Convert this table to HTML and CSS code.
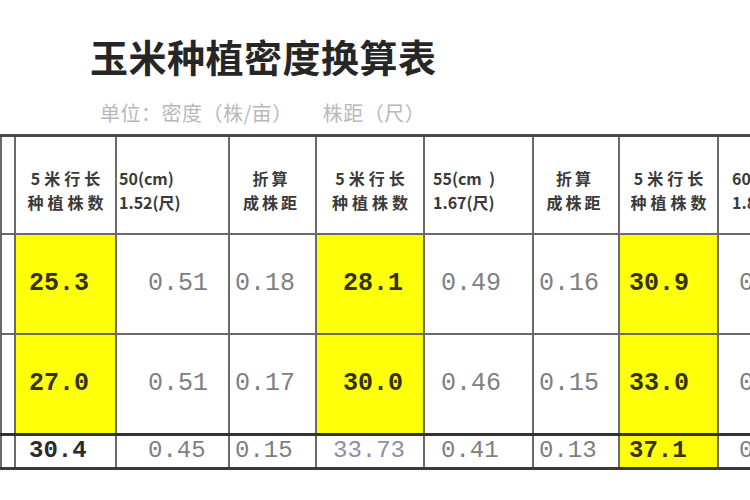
FILE: index.html
```html
<!DOCTYPE html>
<html lang="zh">
<head>
<meta charset="utf-8">
<title>玉米种植密度换算表</title>
<link rel="stylesheet" href="styles.css">
</head>
<body>
<div class="page">
  <h1 class="title">玉米种植密度换算表</h1>
  <p class="subtitle">单位：密度（株/亩）<span class="gap"></span>株距（尺）</p>
  <table class="grid">
    <colgroup>
      <col class="w0"><col class="w1"><col class="w2"><col class="w3"><col class="w4"><col class="w5"><col class="w6"><col class="w7"><col class="w8">
    </colgroup>
    <tr class="head">
      <th></th>
      <th class="c1">5米行长<br>种植株数</th>
      <th class="hl">50(cm)<br>1.52(尺)</th>
      <th class="c3">折算<br>成株距</th>
      <th class="c1">5米行长<br>种植株数</th>
      <th class="hl5">55(cm&nbsp;&nbsp;)<br>1.67(尺)</th>
      <th class="c3">折算<br>成株距</th>
      <th class="c1">5米行长<br>种植株数</th>
      <th class="hl8">60(cm)<br>1.80(尺)</th>
    </tr>
    <tr class="row">
      <td></td>
      <td class="yel n1">25.3</td>
      <td class="g n2">0.51</td>
      <td class="g n3">0.18</td>
      <td class="yel n4">28.1</td>
      <td class="g n5">0.49</td>
      <td class="g n6">0.16</td>
      <td class="yel n7">30.9</td>
      <td class="g n8">0.45</td>
    </tr>
    <tr class="row">
      <td></td>
      <td class="yel n1">27.0</td>
      <td class="g n2">0.51</td>
      <td class="g n3">0.17</td>
      <td class="yel n4">30.0</td>
      <td class="g n5">0.46</td>
      <td class="g n6">0.15</td>
      <td class="yel n7">33.0</td>
      <td class="g n8">0.42</td>
    </tr>
    <tr class="last">
      <td></td>
      <td class="blk n1">30.4</td>
      <td class="g n2">0.45</td>
      <td class="g n3">0.15</td>
      <td class="bl n4">33.73</td>
      <td class="g n5">0.41</td>
      <td class="g n6">0.13</td>
      <td class="yel n7">37.1</td>
      <td class="g n8">0.38</td>
    </tr>
  </table>
</div>
</body>
</html>
```
FILE: styles.css
```css
html, body {
  margin: 0;
  padding: 0;
  background: #ffffff;
  overflow: hidden;
}
.page {
  width: 750px;
  height: 500px;
  overflow: hidden;
  font-family: "Noto Sans CJK SC", "Noto Sans", sans-serif;
}
.title {
  margin: 0;
  padding: 34px 0 0 90px;
  font-size: 38px;
  line-height: 44px;
  font-weight: 700;
  color: #262626;
  letter-spacing: 0.5px;
}
.subtitle {
  margin: 0;
  padding: 24px 0 0 100px;
  height: 32px;
  font-size: 20px;
  line-height: 22px;
  color: #b8b8b8;
  letter-spacing: 0.5px;
}
.gap {
  display: inline-block;
  width: 30px;
}
.grid {
  border-collapse: collapse;
  table-layout: fixed;
  width: 797px;
}
.w0 { width: 14px; }
.w1 { width: 101px; }
.w2 { width: 113px; }
.w3 { width: 87px; }
.w4 { width: 108px; }
.w5 { width: 109px; }
.w6 { width: 86px; }
.w7 { width: 99px; }
.w8 { width: 80px; }
.grid th, .grid td {
  border: 2px solid #6a6a6a;
  padding: 0;
  overflow: hidden;
  white-space: nowrap;
}
.head th {
  border-top: 3px solid #4a4a4a;
  height: 98px;
  font-size: 16px;
  line-height: 24px;
  font-weight: 700;
  color: #3a3a3a;
  padding-top: 10px;
  box-sizing: border-box;
  vertical-align: middle;
}
.head .c1 { text-align: center; letter-spacing: 4px; padding-left: 4px; }
.head .c3 { text-align: center; letter-spacing: 3px; padding-right: 2px; }
.head .hl { text-align: left; padding-left: 2px; }
.head .hl5 { text-align: left; padding-left: 8px; }
.head .hl8 { text-align: left; padding-left: 13px; }
.row td {
  height: 98px;
  font-family: "Liberation Mono", "DejaVu Sans Mono", monospace;
  font-size: 25px;
  line-height: 30px;
  vertical-align: middle;
  text-align: left;
}
.last td {
  border-top: 3px solid #333333;
  border-bottom: 3px solid #3a3a3a;
  height: 31px;
  font-family: "Liberation Mono", "DejaVu Sans Mono", monospace;
  font-size: 24px;
  line-height: 28px;
  vertical-align: middle;
  text-align: left;
}
.yel {
  background: #ffff0a;
  color: #33330c;
  font-weight: 700;
}
.blk {
  color: #2a2a2a;
  font-weight: 700;
}
.bl {
  color: #8a90a8;
}
.g {
  color: #7e7e84;
}
.n1 { padding-left: 13px !important; }
.n2 { padding-left: 31px !important; }
.n3 { padding-left: 5px !important; }
.n4 { padding-left: 26px !important; }
.last .n4 { padding-left: 16px !important; }
.n5 { padding-left: 16px !important; }
.n6 { padding-left: 5px !important; }
.n7 { padding-left: 9px !important; }
.n8 { padding-left: 20px !important; }
```
